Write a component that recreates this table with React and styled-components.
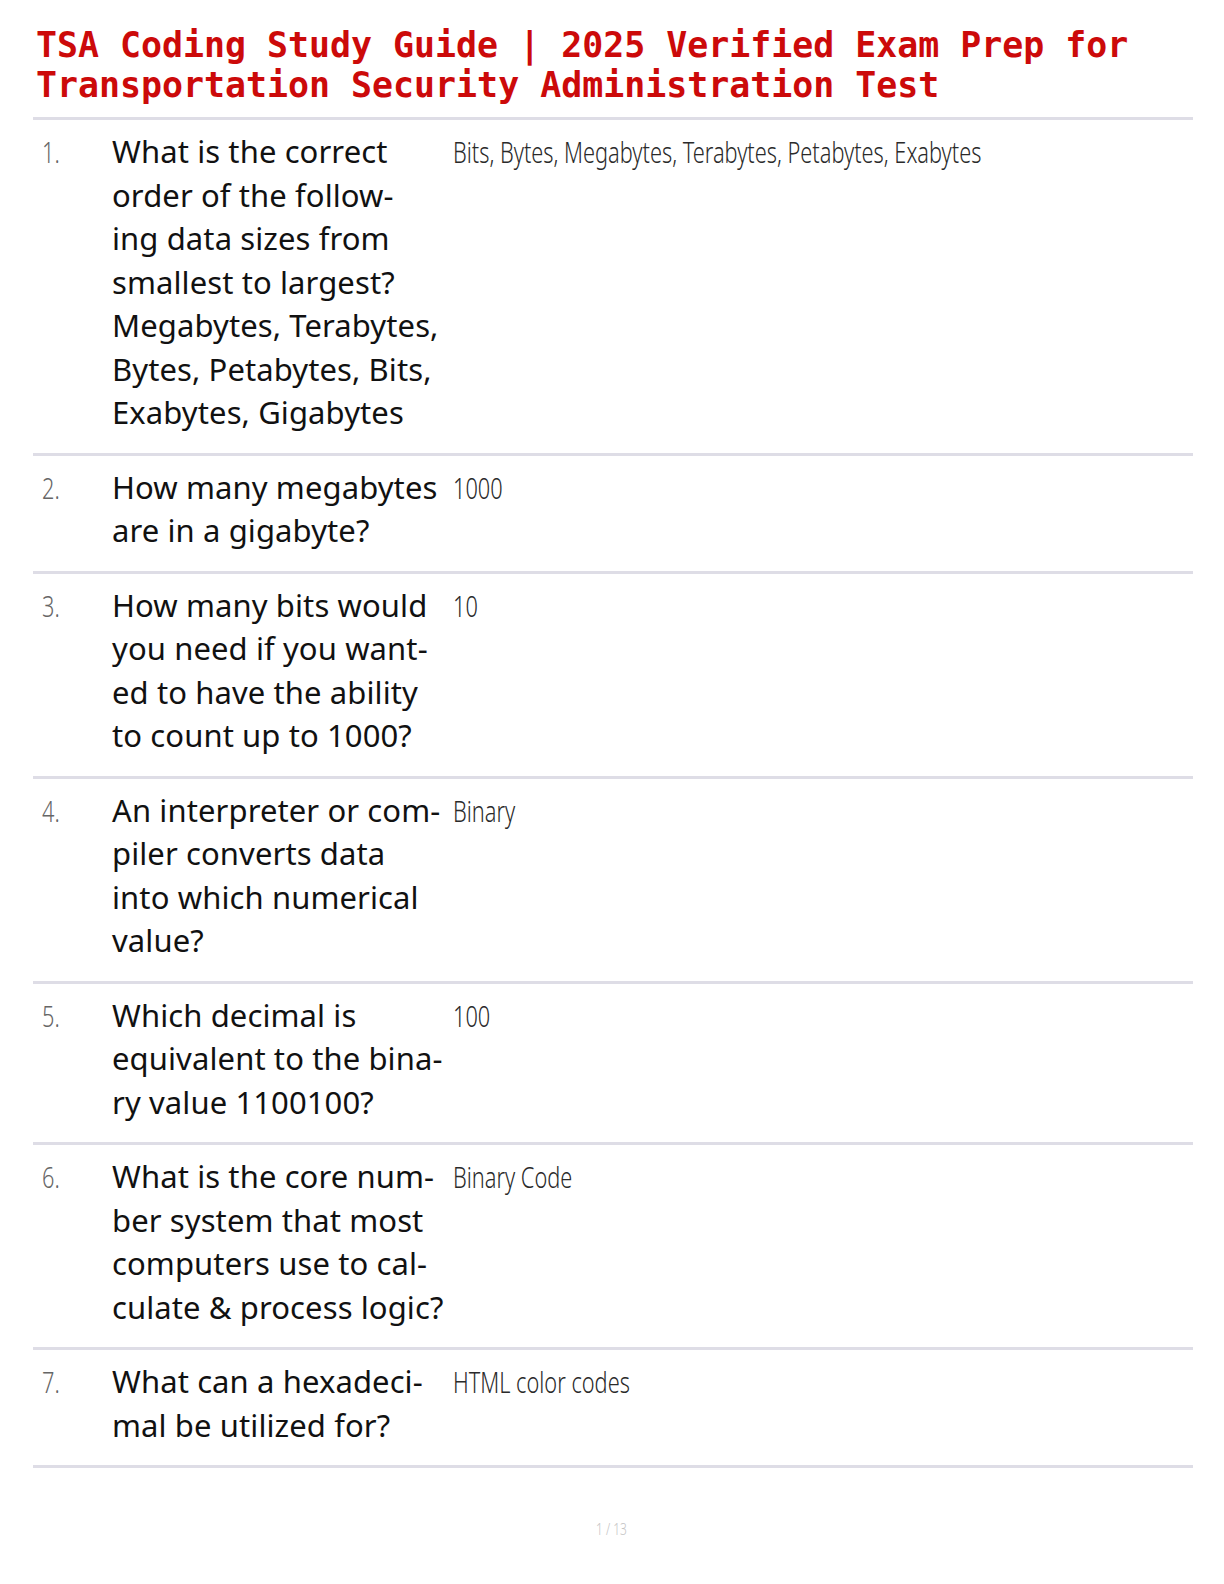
import React from "react";
import styled, { createGlobalStyle } from "styled-components";

const GlobalStyle = createGlobalStyle`
  html, body {
    margin: 0;
    padding: 0;
    background: #ffffff;
  }
  body {
    font-family: "Noto Sans", "Open Sans", sans-serif;
    color: #111;
  }
`;

const Page = styled.div`
  width: 1224px;
  min-height: 1584px;
  box-sizing: border-box;
  padding: 25px 31px 0 33px;
  display: flex;
  flex-direction: column;
`;

const Title = styled.h1`
  margin: 0;
  padding: 0 0 12px 3px;
  font-family: "DejaVu Sans Mono", "Liberation Mono", monospace;
  font-weight: bold;
  font-size: 34.9px;
  line-height: 40px;
  color: #cc0a0a;
  border-bottom: 3px solid #dedde6;
`;

const List = styled.div`
  display: flex;
  flex-direction: column;
`;

const Row = styled.div`
  display: grid;
  grid-template-columns: 70px 341px 1fr;
  padding: 10px 0 18px 9px;
  border-bottom: 3px solid #dedde6;
`;

// narrow light face for the numbers and answers
const Thin = styled.span`
  display: inline-block;
  font-weight: 300;
  font-size: ${(p) => p.$size || 29}px;
  line-height: 43.5px;
  color: ${(p) => p.$color || "#2a2a2a"};
  white-space: nowrap;
  transform: scaleX(0.75);
  transform-origin: left center;
`;

const Question = styled.div`
  font-size: 31px;
  line-height: 43.5px;
  letter-spacing: 0.1px;
  color: #111;
`;

const Line = styled.span`
  display: block;
  white-space: nowrap;
`;

const Footer = styled.div`
  margin-top: 40px;
  display: flex;
  justify-content: center;
  padding-left: 8px;
`;

const items = [
  {
    q: [
      "What is the correct",
      "order of the follow-",
      "ing data sizes from",
      "smallest to largest?",
      "Megabytes, Terabytes,",
      "Bytes, Petabytes, Bits,",
      "Exabytes, Gigabytes",
    ],
    a: "Bits, Bytes, Megabytes, Terabytes, Petabytes, Exabytes",
  },
  { q: ["How many megabytes", "are in a gigabyte?"], a: "1000" },
  {
    q: [
      "How many bits would",
      "you need if you want-",
      "ed to have the ability",
      "to count up to 1000?",
    ],
    a: "10",
  },
  {
    q: [
      "An interpreter or com-",
      "piler converts data",
      "into which numerical",
      "value?",
    ],
    a: "Binary",
  },
  {
    q: ["Which decimal is", "equivalent to the bina-", "ry value 1100100?"],
    a: "100",
  },
  {
    q: [
      "What is the core num-",
      "ber system that most",
      "computers use to cal-",
      "culate & process logic?",
    ],
    a: "Binary Code",
  },
  { q: ["What can a hexadeci-", "mal be utilized for?"], a: "HTML color codes" },
];

export default function App() {
  return (
    <>
      <GlobalStyle />
      <Page>
        <Title>
          TSA Coding Study Guide | 2025 Verified Exam Prep for Transportation
          Security Administration Test
        </Title>
        <List>
          {items.map((it, i) => (
            <Row key={i}>
              <div>
                <Thin $color="#666">{i + 1}.</Thin>
              </div>
              <Question>
                {it.q.map((l, j) => (
                  <Line key={j}>{l}</Line>
                ))}
              </Question>
              <div>
                <Thin>{it.a}</Thin>
              </div>
            </Row>
          ))}
        </List>
        <Footer>
          <Thin $size={16} $color="#c4c4c4">
            1 / 13
          </Thin>
        </Footer>
      </Page>
    </>
  );
}
